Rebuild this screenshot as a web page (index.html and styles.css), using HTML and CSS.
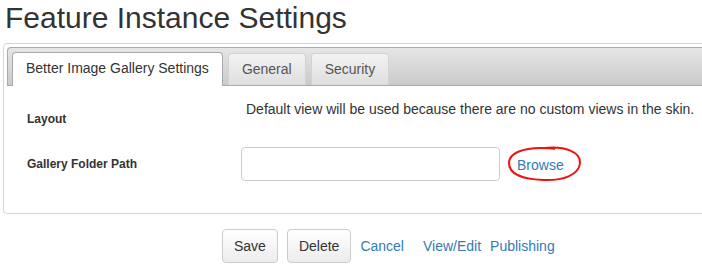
FILE: index.html
```html
<!DOCTYPE html>
<html lang="en">
  <head>
    <meta charset="UTF-8" />
    <meta name="viewport" content="width=device-width, initial-scale=1.0" />
    <title>Feature Instance Settings</title>
    <link rel="stylesheet" href="styles.css">
  </head>
  <body>
    <h1 class="page-title">Feature Instance Settings</h1>

    <div class="panel">
      <div class="tab-strip">
        <div class="tab active">Better Image Gallery Settings</div>
        <div class="tab">General</div>
        <div class="tab">Security</div>
      </div>

      <div class="tab-content">
        <div class="form-row layout-row">
          <label class="form-label">Layout</label>
          <div class="form-text">Default view will be used because there are no custom views in the skin.</div>
        </div>
        <div class="form-row">
          <label class="form-label">Gallery Folder Path</label>
          <input class="form-input" type="text" />
          <span class="browse-wrap">
            <a class="link" href="#">Browse</a>
            <!-- red marker ring drawn over the link -->
            <svg class="marker" width="76" height="38" viewBox="0 0 76 38">
              <path d="M38 3 C58 1 74 7 73 18 C72 30 56 36 36 35 C16 34 2 30 2 18 C2 8 16 3 34 3 C40 3 44 3 48 4"
                    fill="none" stroke="#f01010" stroke-width="2" />
            </svg>
          </span>
        </div>
      </div>
    </div>

    <div class="actions">
      <button class="btn">Save</button>
      <button class="btn">Delete</button>
      <a class="link cancel" href="#">Cancel</a>
      <a class="link" href="#">View/Edit</a>
      <a class="link publishing" href="#">Publishing</a>
    </div>
  </body>
</html>
```

FILE: styles.css
```css
body {
  font-family: "Liberation Sans", Arial, sans-serif;
  margin: 0;
  padding: 0;
  background-color: #fff;
  color: #333;
  overflow: hidden;
}

.page-title {
  margin: 0;
  padding: 1px 0 0 5px;
  font-size: 30px;
  font-weight: normal;
  line-height: 34px;
  height: 42px;
  color: #333;
}

.panel {
  margin-left: 3px;
  width: 740px;
  height: 169px;
  border: 1px solid #d6d6d6;
  border-radius: 4px;
}

.tab-strip {
  display: flex;
  gap: 5px;
  margin: 3px 0 0 3px;
  padding: 4px 0 0 4px;
  height: 33px;
  border: 1px solid #aaa;
  border-right: none;
  border-radius: 4px 0 0 0;
  background: linear-gradient(#e6e6e6, #cacaca);
}

.tab {
  padding: 0 13px;
  height: 31px;
  margin-top: 1px;
  line-height: 31px;
  font-size: 14px;
  color: #555;
  border: 1px solid #d3d3d3;
  border-bottom: none;
  border-radius: 4px 4px 0 0;
  background: linear-gradient(#f3f3f3, #dedede);
}

.tab.active {
  margin-top: 0;
  height: 33px;
  margin-bottom: -1px;
  padding: 0 13px;
  line-height: 31px;
  color: #333;
  border-color: #aaa;
  background: #fff;
}

.tab-content {
  padding: 14px 0 0 23px;
}

.form-row {
  display: flex;
  align-items: center;
}

.layout-row {
  align-items: flex-start;
  height: 47px;
}

.form-label {
  width: 214px;
  font-size: 12px;
  font-weight: bold;
  color: #333;
}

.layout-row .form-label {
  padding-top: 12px;
}

.form-text {
  padding-left: 5px;
  font-size: 14px;
  line-height: 18px;
  color: #333;
}

.form-input {
  width: 259px;
  height: 34px;
  box-sizing: border-box;
  border: 1px solid #ccc;
  border-radius: 4px;
  padding: 0 8px;
  margin: 0;
}

.browse-wrap {
  position: relative;
  margin-left: 17px;
  padding-top: 2px;
}

.marker {
  position: absolute;
  left: -10px;
  top: -9px;
}

.link {
  color: #337ab7;
  font-size: 14px;
  text-decoration: none;
}

.actions {
  display: flex;
  align-items: center;
  padding: 15px 0 0 222px;
}

.btn {
  height: 34px;
  padding: 0 11px;
  margin-right: 9px;
  font-family: "Liberation Sans", Arial, sans-serif;
  font-size: 14px;
  color: #333;
  border: 1px solid #ccc;
  border-radius: 4px;
  background: linear-gradient(#fff, #ececec);
}

.cancel {
  margin-right: 19px;
}

.publishing {
  margin-left: 9px;
}
```
